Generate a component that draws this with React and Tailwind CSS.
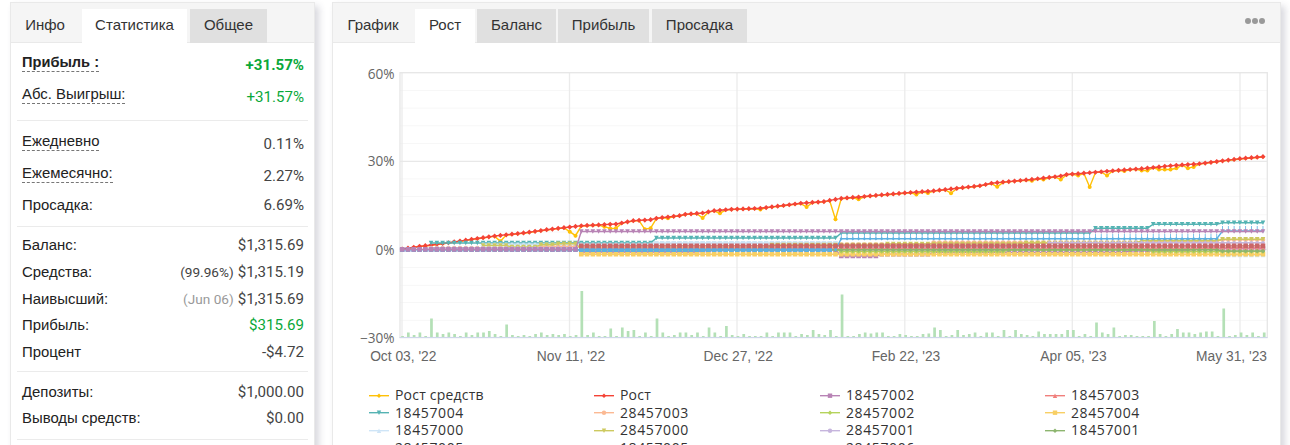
import React from 'react';
import clsx from 'clsx';

const X0 = 402.2;
const STEP = 5.777;
const POINTS = 150;

const px = (i) => X0 + i * STEP;

const growth = [
  [402.3, 249], [420, 246.3], [431.3, 245], [454, 242], [471.7, 239.3], [495, 236], [523.3, 233],
  [546.7, 229.7], [570, 227], [581.7, 225.7], [616.7, 224], [633, 220.7], [650.7, 219.7], [656.7, 218.2],
  [679.7, 215.7], [685, 214.3], [702.7, 213], [714, 210.7], [731.7, 209.3], [760, 208.3], [783.3, 205.5],
  [801.3, 203.2], [823.3, 201.7], [830.3, 200.3], [841.7, 198.3], [859, 197], [876.7, 195.3], [905, 192.9],
  [933.3, 190.9], [956.7, 188.3], [980.3, 185.7], [991.7, 183.2], [1032.7, 179.3], [1060, 176.2],
  [1066.7, 174.5], [1090.3, 172.7], [1113.3, 170.7], [1141.7, 168.7], [1171, 165.7], [1200, 163.7],
  [1223.3, 160.7], [1240, 158.7], [1263, 156.7],
];

// equity dips below the growth line, keyed by point index
const dips = {
  17: 241.3, 29: 231.7, 30: 235.7, 35: 226.7, 36: 228.5, 37: 228.3, 42: 229.3, 43: 228.2, 46: 218.3,
  52: 218, 55: 213.2, 62: 209.5, 70: 207, 75: 219.3, 79: 199.3, 89: 194.5, 91: 193, 95: 193.2, 103: 186.8,
  109: 180.7, 111: 179.5, 114: 179.5, 117: 175.5, 119: 187, 122: 175.5, 125: 171, 128: 170.5, 129: 170.5,
  131: 169.5, 132: 169.5, 133: 169.5, 134: 168.3, 136: 168.2, 137: 166.9,
};

const bars = [
  1, 4.5, 2, 4.5, 1, 18.5, 4.5, 3, 4.5, 3, 1, 4.5, 2, 4.5, 4.5, 6, 3, 1, 12.5, 2, 1, 2, 1, 3, 4.5, 2, 3, 2, 3, 1,
  2, 46, 2, 4.5, 1, 1, 8.5, 1, 9.5, 6, 7, 1, 4.5, 1, 18.5, 4.5, 1, 2, 4.5, 4.5, 2, 4.5, 1, 9.5, 4.5, 1, 11, 2, 1, 3,
  1, 1, 1, 4.5, 1, 4.5, 4.5, 4.5, 1, 3, 2, 7, 3, 2, 7, 1, 42.5, 1, 1, 3, 4.5, 3.5, 4.5, 4.5, 1, 1, 3, 2, 1, 1,
  3, 3.5, 9.5, 7, 1, 2, 7, 2, 3, 4.5, 1, 4.5, 4.5, 1, 7, 1, 7, 3, 2, 1, 5.5, 3, 3, 3, 3, 7, 7, 1, 3, 1,
  14.5, 4.5, 3, 9.5, 1, 2, 2, 1, 1, 1, 16, 3, 1, 3, 8, 4.5, 4.5, 3, 4.5, 5.5, 5.5, 1, 28.5, 1, 2, 4.5, 2, 4.5, 1, 4.5,
];

// each step is [first index, y]; the value holds until the next step
const accounts = [
  { color: '#cfe5f7', shape: 'up', steps: [[14, 243], [76, 246.5], [142, 255]] },
  { color: '#cfe5f7', shape: 'square', steps: [[14, 244.8], [44, 243.4], [76, 247]], until: 110 },
  { color: '#55b3b3', shape: 'down', steps: [[5, 243], [44, 238], [76, 233], [120, 228.2], [130, 224.2], [142, 222.8]] },
  { color: '#cfe5f7', shape: 'square', steps: [[14, 243.6]], until: 44, r: 1.2, width: 0.6 },
  { color: '#fbb993', shape: 'circle', steps: [[5, 248], [24, 246.5], [31, 247.5], [76, 244.5], [92, 242.5], [130, 241], [142, 239.8]] },
  { color: '#cdc95f', shape: 'down', steps: [[14, 245.5], [19, 247], [24, 244.7], [27, 243.8], [31, 248.5], [64, 245], [84, 244], [108, 243], [128, 240.7], [142, 239.2]] },
  { color: '#c6b5dd', shape: 'diamond', steps: [[5, 248], [31, 251.8], [54, 250], [112, 242.8]] },
  { color: '#b883b5', shape: 'square', steps: [[31, 252], [52, 250], [76, 256], [83, 254.3], [92, 252.4], [126, 250.8], [137, 248.5]] },
  { color: '#f2908e', shape: 'up', steps: [[31, 248.7], [76, 248.3], [142, 247.8]] },
  { color: '#f8cf64', shape: 'square', steps: [[31, 254.3]] },
  { color: '#b3cf5a', shape: 'diamond', steps: [[31, 249.6], [76, 251.5], [105, 250], [130, 251.5]] },
  { color: '#8db56f', shape: 'diamond', steps: [[5, 249.8], [76, 249.7], [142, 251]] },
  { color: '#5cb0e2', shape: 'square', steps: [[0, 249.8]], until: 75 },
  { color: '#5cb0e2', shape: 'tall', steps: [[75, 249.8], [76, 238.7], [142, 231]] },
  { color: '#cb6667', shape: 'square', steps: [[31, 245.9]] },
  { color: '#b883b5', shape: 'square', steps: [[0, 249.4]], until: 31 },
  { color: '#b883b5', shape: 'down', steps: [[30, 249.4], [31, 231.5]] },
];

const legend = [
  { name: 'Рост средств', color: '#ffc107', shape: 'diamond' },
  { name: 'Рост', color: '#f44336', shape: 'diamond' },
  { name: '18457002', color: '#b883b5', shape: 'square' },
  { name: '18457003', color: '#f07f7c', shape: 'up' },
  { name: '18457004', color: '#55b3b3', shape: 'down' },
  { name: '28457003', color: '#fbb993', shape: 'circle' },
  { name: '28457002', color: '#b5d35c', shape: 'diamond' },
  { name: '28457004', color: '#f8cf64', shape: 'square' },
  { name: '18457000', color: '#cfe5f7', shape: 'up' },
  { name: '28457000', color: '#cdc95f', shape: 'down' },
  { name: '28457001', color: '#c6b5dd', shape: 'circle' },
  { name: '18457001', color: '#8db56f', shape: 'diamond' },
  { name: '28457005', color: '#5cb0e2', shape: 'square' },
  { name: '18457005', color: '#cb6667', shape: 'square' },
  { name: '28457006', color: '#b883b5', shape: 'down' },
];

const growthAt = (x) => {
  const k = growth.findIndex((p) => p[0] >= x);
  if (k === -1) return growth[growth.length - 1][1];
  if (k === 0) return growth[0][1];
  const [x1, y1] = growth[k - 1];
  const [x2, y2] = growth[k];
  return y1 + ((y2 - y1) * (x - x1)) / (x2 - x1);
};

const growthPoints = Array.from({ length: POINTS }, (_, i) => [px(i), growthAt(px(i))]);
const equityPoints = growthPoints.map(([x, y], i) => [x, dips[i] ?? y + 0.3]);

const stepPoints = ({ steps, until = POINTS }) => {
  const out = [];
  for (let i = steps[0][0]; i < until; i++) {
    const y = steps.filter((s) => s[0] <= i).pop()[1];
    out.push([px(i), y]);
  }
  return out;
};

const markerPath = (shape, x, y, r) => {
  switch (shape) {
    case 'square':
      return `M${x - r} ${y - r}h${2 * r}v${2 * r}h${-2 * r}z`;
    case 'down':
      return `M${x - r} ${y - r}h${2 * r}l${-r} ${2 * r}z`;
    case 'up':
      return `M${x} ${y - r}l${r} ${2 * r}h${-2 * r}z`;
    case 'tall':
      return `M${x - 0.4} ${y - 5}h0.8v3.6l1.2 1.4l-1.6 1.7l-1.6 -1.7l1.2 -1.4z`;
    case 'circle':
      return `M${x - r} ${y}a${r} ${r} 0 1 0 ${2 * r} 0a${r} ${r} 0 1 0 ${-2 * r} 0z`;
    default:
      return `M${x} ${y - r}l${r} ${r}l${-r} ${r}l${-r} ${-r}z`;
  }
};

function Series({ points, color, shape, r = 2.3, width = 1.4 }) {
  return (
    <g>
      <polyline points={points.map((p) => p.join(',')).join(' ')} fill="none" stroke={color} strokeWidth={width} />
      <path d={points.map(([x, y]) => markerPath(shape, x, y, r)).join('')} fill={color} />
    </g>
  );
}

function Chart() {
  const minor = [90.5, 108.1, 125.8, 143.4, 178.9, 196.5, 214.8, 232, 267.5, 285.3, 302.5, 320.3];
  const labels = [
    ["Oct 03, '22", 403.3, 'middle'],
    ["Nov 11, '22", 571, 'middle'],
    ["Dec 27, '22", 738.3, 'middle'],
    ["Feb 22, '23", 906, 'middle'],
    ["Apr 05, '23", 1073.5, 'middle'],
    ["May 31, '23", 1267, 'end'],
  ];
  return (
    <svg viewBox="333 43 947 330" className="block h-[330px] w-[947px]">
      {minor.map((y) => (
        <line key={y} x1="400" x2="1267" y1={y} y2={y} stroke="#f7f7f7" />
      ))}
      {[402, 569.5, 737, 904.8, 1072.3, 1240].map((x) => (
        <line key={x} x1={x} x2={x} y1="73" y2="337" stroke="#ebebeb" strokeWidth="1.3" />
      ))}
      {[161.3, 249.4].map((y) => (
        <line key={y} x1="400" x2="1267" y1={y} y2={y} stroke="#e8e8e8" strokeWidth="1.3" />
      ))}
      <rect x="400" y="72.7" width="867.3" height="264.8" fill="none" stroke="#e6e6e6" strokeWidth="1.3" />

      {bars.map((h, i) => (
        <rect key={i} x={X0 + 0.2 + i * 5.783 - 1.2} y={337 - h} width="2.7" height={h} fill="#b4e0b6" />
      ))}
      <line x1="399.5" x2="1267.5" y1="337.6" y2="337.6" stroke="#ccd6eb" />

      <Series points={equityPoints} color="#ffc107" shape="diamond" r={1.8} />
      {equityPoints
        .filter((_, i) => dips[i])
        .map(([x, y]) => (
          <circle key={x} cx={x} cy={y} r="2" fill="#ffc107" />
        ))}
      <Series points={growthPoints} color="#f44336" shape="diamond" r={2.6} width={1.4} />
      {accounts.map((a, i) => (
        <Series key={i} points={stepPoints(a)} color={a.color} shape={a.shape} r={a.r} width={a.width} />
      ))}

      <g className="fill-[#666] font-['Open_Sans',sans-serif] text-[13.6px]" textAnchor="end">
        <text x="394.5" y="78.5">60%</text>
        <text x="394.5" y="166">30%</text>
        <text x="394.5" y="254.5">0%</text>
        <text x="394.5" y="342.7">−30%</text>
      </g>
      <g className="fill-[#666] font-['Liberation_Sans',sans-serif] text-[13.8px]">
        {labels.map(([text, x, anchor]) => (
          <text key={text} x={x} y="361" textAnchor={anchor}>{text}</text>
        ))}
      </g>
    </svg>
  );
}

function Legend() {
  return (
    <div className="ml-[36px] mt-[13px] grid grid-cols-[225px_226px_225px_200px] font-['Open_Sans',sans-serif] text-[14px] leading-[17.6px] text-[#333]">
      {legend.map(({ name, color, shape }, i) => (
        <div key={name} className="flex h-[17.6px] items-center gap-[6px]">
          <svg className="h-[10px] w-[20px] shrink-0" viewBox="0 0 20 10">
            <line x1="0" x2="20" y1="5.7" y2="5.7" stroke={color} strokeWidth="1.4" />
            <path d={markerPath(shape, 10, 5.7, 2.2)} fill={color} />
          </svg>
          <span className={i < 2 ? 'tracking-[0.2px]' : 'tracking-[0.6px]'}>{name}</span>
        </div>
      ))}
    </div>
  );
}

function Row({ label, value, note, noteClass, className, valueClass, dotted, bold }) {
  return (
    <div className={clsx('flex items-center justify-between pl-[11px] pr-[10px]', className)}>
      <span
        className={clsx(
          "font-['Liberation_Sans',sans-serif] text-[#222]",
          dotted && 'mb-[3px] border-b border-dashed border-[#777] leading-[17px]',
          bold ? 'text-[14.6px] font-bold' : 'text-[14.9px]'
        )}
      >
        {label}
      </span>
      <span
        className={clsx(
          "font-['Roboto',sans-serif] text-[15.1px]",
          dotted && 'mt-[2px]',
          bold && 'font-bold',
          valueClass || 'text-[#444]'
        )}
      >
        {note && <span className={clsx('mr-1 text-[13.6px]', noteClass)}>{note}</span>}
        {value}
      </span>
    </div>
  );
}

function Divider({ className }) {
  return <div className={clsx('mx-[6px] h-px bg-[#ebebeb]', className)} />;
}

function Tab({ children, active, plain, className }) {
  return (
    <div
      className={clsx(
        'flex h-[34px] items-center justify-center pb-[2px]',
        active && 'bg-white',
        !active && !plain && 'bg-[#e0e0e0]',
        className
      )}
    >
      {children}
    </div>
  );
}

function Panel({ tabs, menu, className, children }) {
  return (
    <section className={clsx('h-[460px] shrink-0 border border-[#e9e9e9] bg-white shadow-[4px_4px_7px_rgba(60,60,90,0.2)]', className)}>
      <header className="flex h-[40px] items-end border-b border-[#e9e9e9] bg-[#f5f5f5] font-['Liberation_Sans',sans-serif] text-[15px] text-[#333]">
        <div className="-mb-px flex">{tabs}</div>
        {menu}
      </header>
      {children}
    </section>
  );
}

export default function App() {
  return (
    <div className="flex h-[445px] w-[1290px] overflow-hidden bg-white pl-[10px] pt-[2px]">
      <Panel
        className="mr-[17px] w-[305px]"
        tabs={
          <>
            <Tab plain className="w-[71px] pr-[3px]">Инфо</Tab>
            <Tab active className="w-[105px]">Статистика</Tab>
            <Tab className="ml-[3px] w-[77px]">Общее</Tab>
          </>
        }
      >
        <Row className="mt-[5px] h-[32px]" label="Прибыль :" value="+31.57%" valueClass="text-[#0aa83a]" dotted bold />
        <Row className="h-[33px]" label="Абс. Выигрыш:" value="+31.57%" valueClass="text-[#0aa83a]" dotted />
        <Divider className="mt-[7px]" />
        <Row className="mt-[6px] h-[32px]" label="Ежедневно" value="0.11%" dotted />
        <Row className="h-[32px]" label="Ежемесячно:" value="2.27%" dotted />
        <Row className="h-[29px]" label="Просадка:" value="6.69%" />
        <Divider className="mt-[6px]" />
        <Row className="mt-[5px] h-[27px]" label="Баланс:" value="$1,315.69" />
        <Row className="h-[27px]" label="Средства:" note="(99.96%)" value="$1,315.19" />
        <Row className="h-[26px]" label="Наивысший:" note="(Jun 06)" noteClass="text-[#999]" value="$1,315.69" />
        <Row className="h-[27px]" label="Прибыль:" value="$315.69" valueClass="text-[#0aa83a]" />
        <Row className="h-[26px]" label="Процент" value="-$4.72" />
        <Divider className="mt-[6px]" />
        <Row className="mt-[7px] h-[26px]" label="Депозиты:" value="$1,000.00" />
        <Row className="h-[27px]" label="Выводы средств:" value="$0.00" />
        <Divider className="mt-[7px]" />
      </Panel>

      <Panel
        className="w-[949px]"
        tabs={
          <>
            <Tab plain className="w-[82px] pr-[2px]">График</Tab>
            <Tab active className="w-[60px]">Рост</Tab>
            <Tab className="ml-[2px] w-[79px]">Баланс</Tab>
            <Tab className="ml-[2px] w-[91px]">Прибыль</Tab>
            <Tab className="ml-[3px] w-[95px]">Просадка</Tab>
          </>
        }
        menu={
          <div className="mb-[18px] ml-auto mr-[15px] flex gap-px">
            <span className="size-[6px] rounded-full bg-[#999]" />
            <span className="size-[6px] rounded-full bg-[#999]" />
            <span className="size-[6px] rounded-full bg-[#999]" />
          </div>
        }
      >
        <Chart />
        <Legend />
      </Panel>
    </div>
  );
}
